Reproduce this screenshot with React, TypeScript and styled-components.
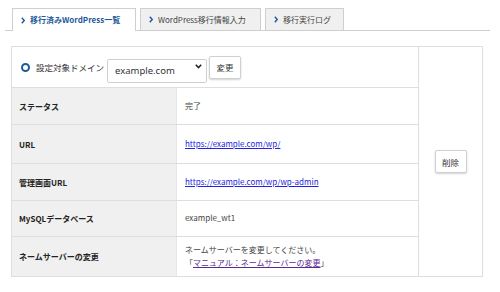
import React from "react";
import styled, { createGlobalStyle, css } from "styled-components";

const GlobalStyle = createGlobalStyle`
  body {
    margin: 0;
    background: #fff;
    font-family: "Noto Sans CJK JP", "Noto Sans", sans-serif;
    color: #333;
  }
  * { box-sizing: border-box; }
`;

const S = {
  Page: styled.div`
    width: 500px;
    padding: 8px 10px 0 5px;
  `,
  TabBar: styled.div`
    display: flex;
    align-items: flex-end;
    gap: 4px;
    padding-left: 7px;
    border-bottom: 1px solid #cfcfcf;
  `,
  Tab: styled.div<{ $active?: boolean; $w: number }>`
    display: flex;
    align-items: center;
    gap: 5px;
    width: ${(p) => p.$w}px;
    height: 22px;
    padding: 0 8px;
    border: 1px solid #cfcfcf;
    border-bottom: none;
    background: #f0f0f0;
    font-size: 8px;
    line-height: 1;
    color: #444;
    white-space: nowrap;
    ${(p) =>
      p.$active &&
      css`
        height: 23px;
        margin-bottom: -1px;
        background: #fff;
        color: #1f5a99;
        font-weight: 700;
      `}
  `,
  Panel: styled.div`
    display: grid;
    grid-template-columns: 406px 64px;
    width: 472px;
    margin: 15px 0 0 6px;
    border: 1px solid #dedede;
  `,
  Main: styled.div`
    display: flex;
    flex-direction: column;
  `,
  DomainRow: styled.div`
    display: flex;
    align-items: center;
    height: 41px;
    padding-left: 9px;
    border-bottom: 1px solid #dedede;
  `,
  Radio: styled.span`
    width: 9px;
    height: 9px;
    border: 2px solid #1f5a99;
    border-radius: 50%;
    margin-right: 6px;
  `,
  DomainLabel: styled.span`
    font-size: 8.5px;
    color: #333;
    margin-right: 3px;
    white-space: nowrap;
  `,
  SelectWrap: styled.div`
    position: relative;
    width: 100px;
    height: 24px;
    margin-right: 2px;
  `,
  Select: styled.select`
    appearance: none;
    width: 100%;
    height: 100%;
    padding: 0 0 0 7px;
    border: 1px solid #d0d0d0;
    border-radius: 2px;
    background: #fff;
    font-family: "Noto Sans", sans-serif;
    font-size: 9.5px;
    color: #333;
  `,
  Caret: styled.svg`
    position: absolute;
    right: 5px;
    top: 9px;
    pointer-events: none;
  `,
  Button: styled.button<{ $w: number }>`
    width: ${(p) => p.$w}px;
    height: 23px;
    padding: 0;
    border: 1px solid #d0d0d0;
    border-radius: 2px;
    background: #fff;
    box-shadow: 0 1px 2px rgba(0, 0, 0, 0.18);
    font-family: "Noto Sans CJK JP", sans-serif;
    font-size: 8.5px;
    color: #333;
  `,
  Row: styled.div<{ $h: number; $last?: boolean }>`
    display: grid;
    grid-template-columns: 164px 1fr;
    height: ${(p) => p.$h}px;
    border-bottom: ${(p) => (p.$last ? "none" : "1px solid #dedede")};
  `,
  Label: styled.div`
    display: flex;
    align-items: center;
    padding-left: 7px;
    background: #f0f0f0;
    font-size: 8px;
    font-weight: 700;
    color: #222;
    white-space: nowrap;
  `,
  Value: styled.div`
    display: flex;
    flex-direction: column;
    justify-content: center;
    padding-left: 8px;
    border-left: 1px solid #e6e6e6;
    font-size: 8px;
    line-height: 12.5px;
    color: #444;
    white-space: nowrap;
  `,
  Link: styled.a<{ $visited?: boolean }>`
    color: ${(p) => (p.$visited ? "#5b2a91" : "#2323dd")};
    text-decoration: underline;
  `,
  Side: styled.div`
    display: flex;
    align-items: center;
    justify-content: center;
    border-left: 1px solid #dedede;
  `,
};

const Chevron = ({ active }: { active?: boolean }) => (
  <svg width="4" height="7" viewBox="0 0 4 7">
    <path d="M0.8 0.8 L3.2 3.5 L0.8 6.2" fill="none" stroke={active ? "#1f5a99" : "#1f5a99"} strokeWidth="1.4" />
  </svg>
);

const rows = [
  { label: "ステータス", h: 37, value: <span>完了</span> },
  { label: "URL", h: 39, value: <S.Link href="#">https://example.com/wp/</S.Link> },
  { label: "管理画面URL", h: 37, value: <S.Link href="#">https://example.com/wp/wp-admin</S.Link> },
  { label: "MySQLデータベース", h: 36, value: <span>example_wt1</span> },
];

const App = () => {
  return (
    <S.Page>
      <GlobalStyle />
      <S.TabBar>
        <S.Tab $active $w={124}>
          <Chevron active />
          移行済みWordPress一覧
        </S.Tab>
        <S.Tab $w={121}>
          <Chevron />
          WordPress移行情報入力
        </S.Tab>
        <S.Tab $w={79}>
          <Chevron />
          移行実行ログ
        </S.Tab>
      </S.TabBar>

      <S.Panel>
        <S.Main>
          <S.DomainRow>
            <S.Radio />
            <S.DomainLabel>設定対象ドメイン</S.DomainLabel>
            <S.SelectWrap>
              <S.Select defaultValue="example.com">
                <option>example.com</option>
              </S.Select>
              <S.Caret width="7" height="5" viewBox="0 0 7 5">
                <path d="M0.8 0.8 L3.5 3.6 L6.2 0.8" fill="none" stroke="#222" strokeWidth="1.5" />
              </S.Caret>
            </S.SelectWrap>
            <S.Button $w={32}>変更</S.Button>
          </S.DomainRow>
          {rows.map((r) => (
            <S.Row key={r.label} $h={r.h}>
              <S.Label>{r.label}</S.Label>
              <S.Value>{r.value}</S.Value>
            </S.Row>
          ))}
          <S.Row $h={39} $last>
            <S.Label>ネームサーバーの変更</S.Label>
            <S.Value>
              <span>ネームサーバーを変更してください。</span>
              <span>
                「<S.Link href="#" $visited>マニュアル：ネームサーバーの変更</S.Link>」
              </span>
            </S.Value>
          </S.Row>
        </S.Main>
        <S.Side>
          <S.Button $w={32}>削除</S.Button>
        </S.Side>
      </S.Panel>
    </S.Page>
  );
};

export default App;
